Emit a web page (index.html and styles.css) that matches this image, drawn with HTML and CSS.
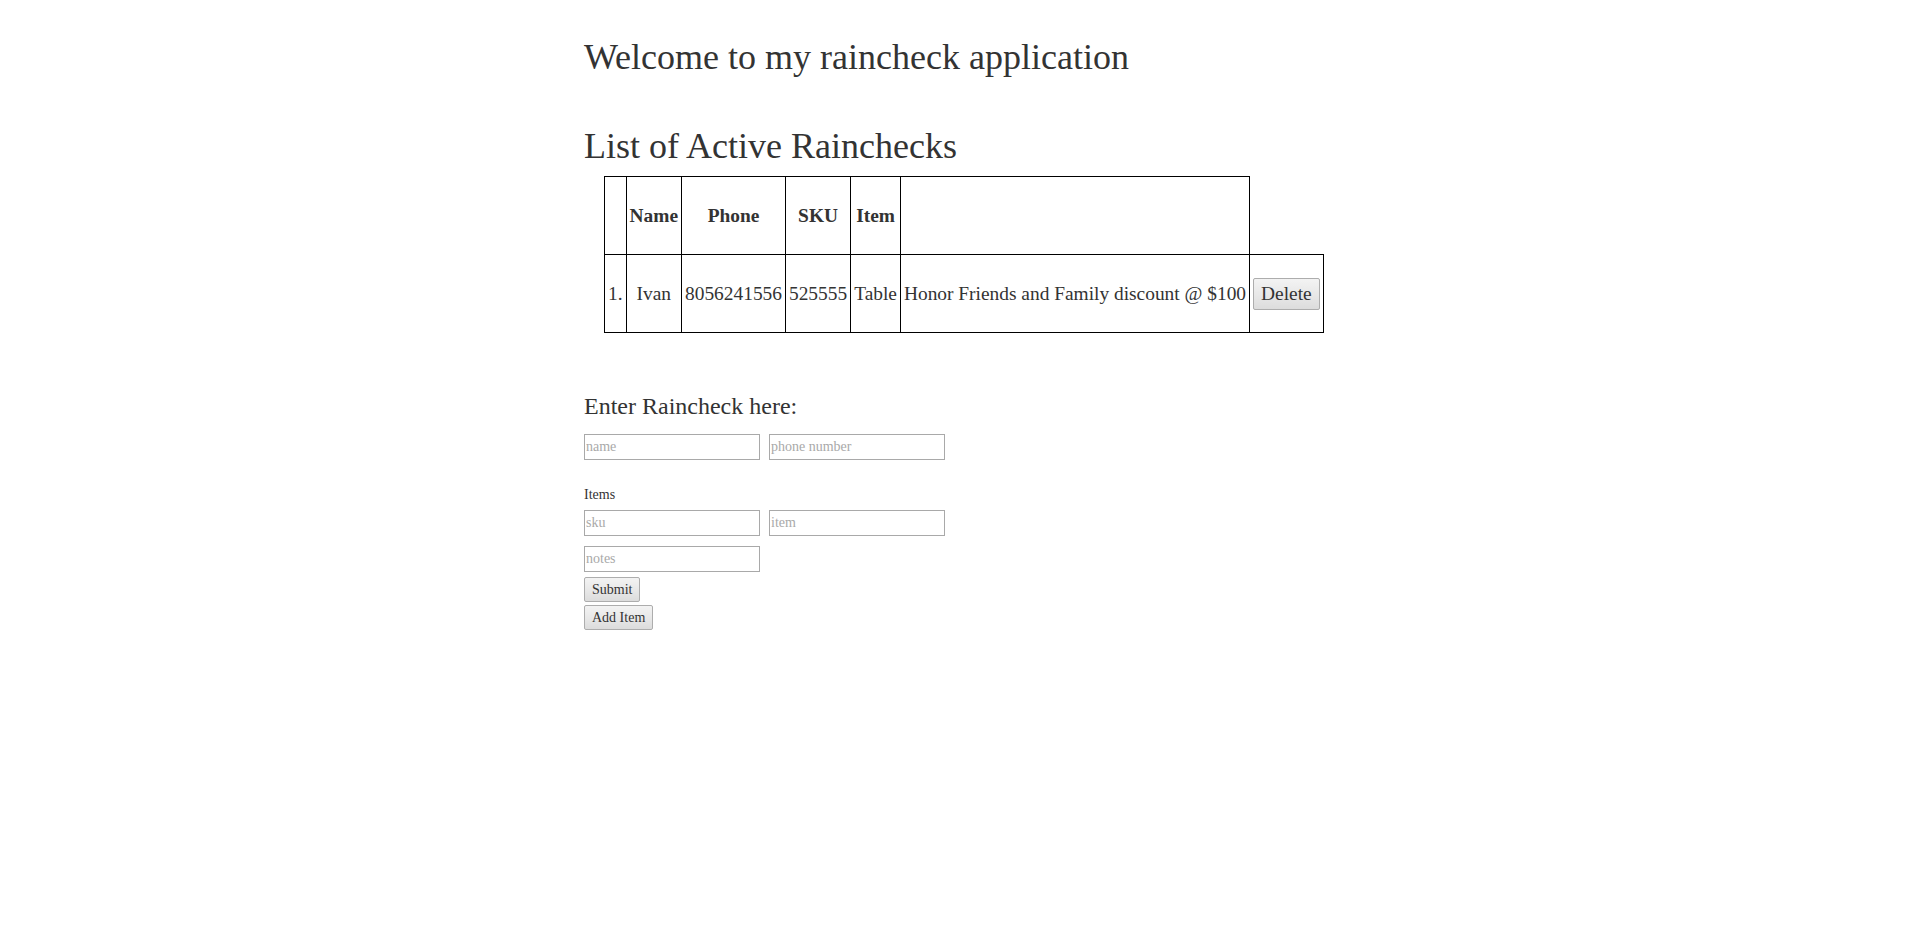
FILE: index.html
```html
<!DOCTYPE html>
<html>
<head>
<meta charset="utf-8">
<title>Raincheck</title>
<link rel="stylesheet" href="styles.css">
</head>
<body>
<div class="container">
  <h1 class="title">Welcome to my raincheck application</h1>
  <h2 class="list-title">List of Active Rainchecks</h2>
  <table class="grid">
    <tr>
      <th></th>
      <th>Name</th>
      <th>Phone</th>
      <th>SKU</th>
      <th>Item</th>
      <th></th>
    </tr>
    <tr>
      <td>1.</td>
      <td>Ivan</td>
      <td>8056241556</td>
      <td>525555</td>
      <td>Table</td>
      <td>Honor Friends and Family discount @ $100</td>
      <td><button class="btn btn-del" type="button">Delete</button></td>
    </tr>
  </table>

  <h3 class="form-title">Enter Raincheck here:</h3>
  <form class="form">
    <div class="row">
      <input class="field" type="text" placeholder="name">
      <input class="field" type="text" placeholder="phone number">
    </div>
    <div class="items-label">Items</div>
    <div class="row">
      <input class="field" type="text" placeholder="sku">
      <input class="field" type="text" placeholder="item">
    </div>
    <div class="row row-notes">
      <input class="field" type="text" placeholder="notes">
    </div>
    <div class="actions">
      <button class="btn" type="button">Submit</button>
      <button class="btn" type="button">Add Item</button>
    </div>
  </form>
</div>
</body>
</html>
```

FILE: styles.css
```css
html, body {
  margin: 0;
  padding: 0;
  background: #fff;
}

body {
  font-family: "Liberation Serif", "Times New Roman", serif;
  font-size: 14px;
  line-height: 1.42857;
  color: #333;
}

.container {
  width: 737px;
  margin: 0 auto;
}

.title {
  font-size: 36px;
  font-weight: normal;
  line-height: 1.1;
  margin: 38px 0 0;
}

.list-title {
  font-size: 36px;
  font-weight: normal;
  line-height: 1.1;
  margin: 49px 0 10px;
}

.grid {
  border-collapse: collapse;
  margin-left: 20px;
  font-size: 19.4px;
  line-height: 1.42857;
  color: #333;
}

.grid th,
.grid td {
  border: 1px solid #000;
  padding: 3px;
  height: 71px;
  text-align: center;
  vertical-align: middle;
  white-space: nowrap;
}

.grid th {
  font-weight: bold;
}

.btn {
  font-family: "Liberation Serif", "Times New Roman", serif;
  font-size: 14px;
  line-height: 21px;
  color: #333;
  padding: 1px 7px;
  margin: 0;
  border: 1px solid #adadad;
  border-radius: 2px;
  background: linear-gradient(#f3f3f3, #e6e6e6 60%, #dcdcdc);
  display: inline-block;
  cursor: pointer;
}

.btn-del {
  font-size: 19.4px;
  line-height: 28px;
}

.form-title {
  font-size: 24px;
  font-weight: normal;
  line-height: 1.1;
  margin: 60px 0 14px;
}

.form {
  display: flex;
  flex-direction: column;
  align-items: flex-start;
}

.row {
  display: flex;
  gap: 9px;
}

.field {
  box-sizing: border-box;
  width: 176px;
  height: 26px;
  margin: 0;
  padding: 1px 1px;
  border: 1px solid #a9a9a9;
  font-family: "Liberation Serif", "Times New Roman", serif;
  font-size: 14px;
  line-height: 20px;
  color: #333;
  background: #fff;
}

.field::placeholder {
  color: #a9a9a9;
  opacity: 1;
}

.items-label {
  margin-top: 25px;
  margin-bottom: 5px;
  line-height: 20px;
}

.row-notes {
  margin-top: 10px;
}

.actions {
  display: flex;
  flex-direction: column;
  align-items: flex-start;
  gap: 3px;
  margin-top: 5px;
}
```
